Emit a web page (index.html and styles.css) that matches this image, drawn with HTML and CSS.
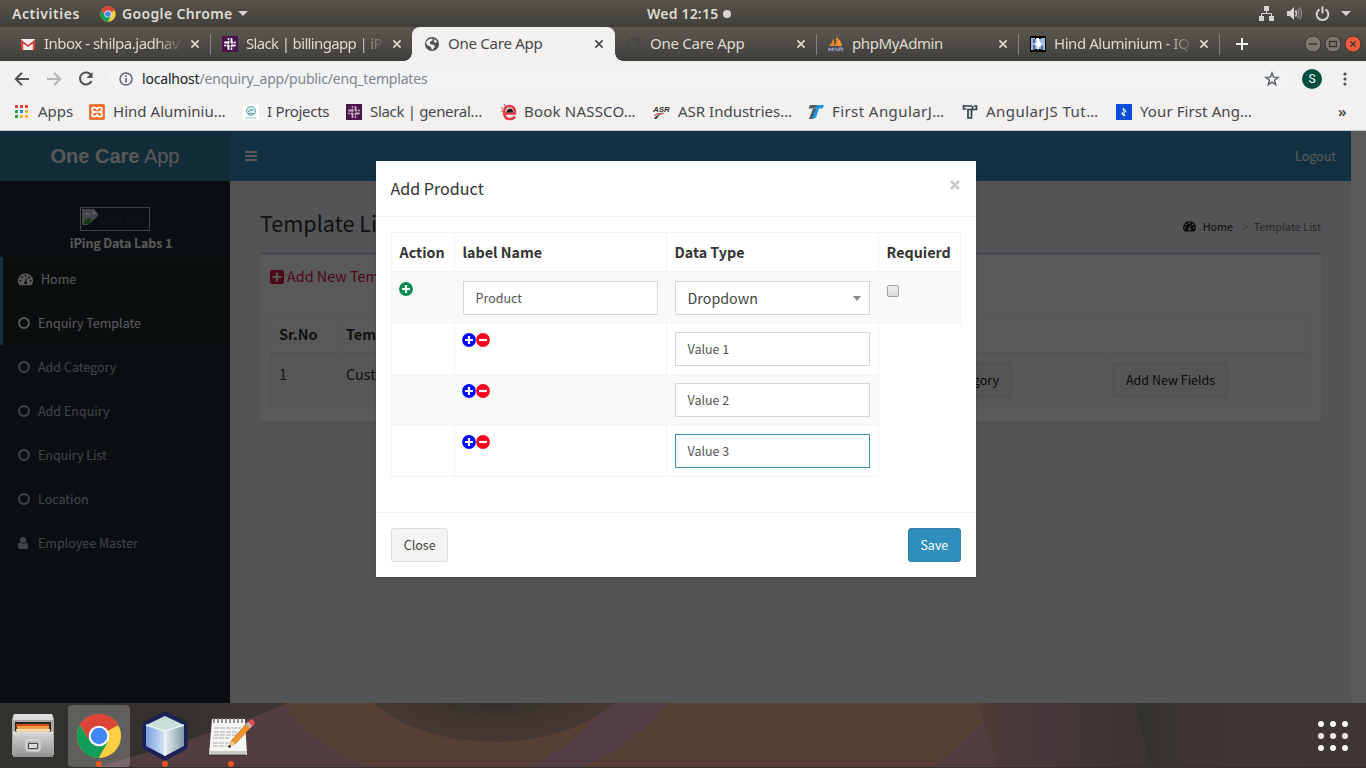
FILE: index.html
```html
<!DOCTYPE html>
<html lang="en">
<head>
<meta charset="utf-8">
<title>One Care App</title>
<link rel="stylesheet" href="styles.css">
</head>
<body>
<svg class="defs" width="0" height="0">
  <symbol id="chrome" viewBox="0 0 48 48">
    <circle cx="24" cy="24" r="23" fill="#ffcd40"/>
    <path d="M24 24 4.1 12.5A23 23 0 0 1 43.9 12.5z" fill="#db4437"/>
    <path d="M24 13H44A23 23 0 0 0 4.1 12.5L14.5 29.5z" fill="#db4437"/>
    <path d="M4.1 12.5A23 23 0 0 0 23.6 47L33.5 29.5 24 24 14.5 29.5z" fill="#0f9d58"/>
    <circle cx="24" cy="24" r="10.8" fill="#fff"/><circle cx="24" cy="24" r="8.6" fill="#4285f4"/>
  </symbol>
  <symbol id="plus-circle" viewBox="0 0 14 14"><circle cx="7" cy="7" r="6.9" fill="currentColor"/><path d="M7 3v8M3 7h8" stroke="#fff" stroke-width="2.200"/></symbol>
  <symbol id="minus-circle" viewBox="0 0 14 14"><circle cx="7" cy="7" r="6.9" fill="currentColor"/><path d="M3 7h8" stroke="#fff" stroke-width="2.200"/></symbol>
  <symbol id="dash" viewBox="0 0 14 12"><path d="M7 .4A6.8 6.8 0 0 0 1.2 11q.2.4.6.4h10.4q.4 0 .6-.4A6.8 6.8 0 0 0 7 .4z" fill="currentColor"/><g class="dash-dots"><circle cx="2.1" cy="7.2" r=".95"/><circle cx="3.6" cy="3.8" r=".95"/><circle cx="7" cy="2.4" r=".95"/><circle cx="10.4" cy="3.8" r=".95"/><circle cx="11.9" cy="7.2" r=".95"/><circle cx="7" cy="9" r="1.4"/><path d="M6.6 8.6 7.6 4.6l.8.2-.8 4z"/></g></symbol>
  <symbol id="ring" viewBox="0 0 12 12"><circle cx="6" cy="6" r="4.9" fill="none" stroke="currentColor" stroke-width="2"/></symbol>
  <symbol id="x" viewBox="0 0 10 10"><path d="M1.400 1.400l7.200 7.200M8.600 1.400l-7.200 7.200" stroke="currentColor" stroke-width="1.700"/></symbol>
  <symbol id="slack" viewBox="0 0 16 16"><path fill="#4a154b" d="M0 0h16v16H0z"/><g stroke="currentColor" stroke-width="1.900" stroke-linecap="round"><path d="M6.500 3v.1M6.500 5.600V7M9.500 3v3.500M6.500 9.500V13M9.500 9.500v1M9.500 12.900v.1M3 6.500h3.500M9.500 6.500h1M12.900 6.500h.1M3 9.500h.1M5.500 9.500h1M9.500 9.500H13"/></g></symbol>
</svg>
<div class="screen">
  <header class="topbar">
    <span class="activities">Activities</span>
    <svg class="tb-chrome" width="16" height="16"><use href="#chrome"/></svg>
    <span class="appname">Google Chrome</span><i class="tri"></i>
    <span class="clock">Wed 12:15</span><i class="dot"></i>
    <svg class="tray" width="96" height="17" viewBox="0 0 96 17"><g fill="#d6d4d0"><path d="M6 1h5v5H6zM1 11h5v5H1zM11 11h5v5h-5z"/><path d="M3.500 11V8.500h10V11M8.500 6v2.500" fill="none" stroke="#d6d4d0"/><path d="M29 6h3l4-4v13l-4-4h-3z"/></g><g fill="none"><path d="M37.500 5.500q2 3 0 6" stroke="#d6d4d0" stroke-width="1.500"/><path d="M39.500 4q3 4.500 0 9M41.500 2.500q4 6 0 12" stroke="#8b8983" stroke-width="1.500"/><path d="M61.500 4.300a5.800 5.800 0 1 0 6 0M64.500 1.500v7" stroke="#d6d4d0" stroke-width="2"/></g><path d="M83 6h10l-5 5z" fill="#d6d4d0"/></svg>
  </header>
  <nav class="tabs">
    <div class="tab"><svg width="16" height="16" viewBox="0 0 16 16"><path d="M1 3h14v11H1z" fill="#eee"/><path d="M1 14V3.500l7 5.500 7-5.500V14h-2.200V7.500L8 11 3.200 7.500V14z" fill="#d93f35"/></svg><span class="tt t1 fade">Inbox - shilpa.jadhav</span><svg class="cl" width="10" height="10"><use href="#x"/></svg></div>
    <div class="tab nosep"><svg class="white" width="16" height="16"><use href="#slack"/></svg><span class="tt t2 fade">Slack | billingapp | iP</span><svg class="cl" width="10" height="10"><use href="#x"/></svg></div>
    <div class="tab active"><svg width="16" height="16" viewBox="0 0 16 16"><circle cx="8" cy="8" r="7" fill="#4d4f52"/><path d="M2 6q3-4 6-3.500L9 4 6 6v2l4 1 1 2-3 3-1-3-4-2zM10 3l3 2-1 2-2-1z" fill="#f2f1f0"/></svg><span class="tt t3">One Care App</span><svg class="cl" width="10" height="10"><use href="#x"/></svg></div>
    <div class="tab"><svg width="16" height="16" viewBox="0 0 16 16"><circle cx="8" cy="8" r="7" fill="#474743"/><path d="M3 5q3-3 5-2L6 7l4 2-2 4-2-4-4-1z" fill="#504f4b"/></svg><span class="tt t3">One Care App</span><svg class="cl" width="10" height="10"><use href="#x"/></svg></div>
    <div class="tab"><svg width="16" height="16" viewBox="0 0 16 16"><path d="M1 10Q5 6 5 2q2 4 1 8zM6.500 10Q9 6 8 1q6 4 6 9z" fill="#f3952d"/><path d="M3.500 10 5 4M9 10V4" stroke="#c87425"/><path d="M0 11.500h16v4H0z" fill="#52587e"/><path d="M1 15v-3l2 2 2-2v3M7 12l2 2v1M11 15v-3h3v3" stroke="#d1c7b6" fill="none" stroke-width=".8"/></svg><span class="tt t4">phpMyAdmin</span><svg class="cl" width="10" height="10"><use href="#x"/></svg></div>
    <div class="tab last"><svg width="16" height="16" viewBox="0 0 16 16"><path d="M0 0h16v16H0z" fill="#000"/><path d="M1 2h4v12H1zM11 2h4v12h-4zM5 3h6v10H5z" fill="#9db9e8"/><path d="M6 2h3l1 4 2 2-3 3-1 4-1-5-2-2 2-2z" fill="#fff"/><path d="M4 3v4M4 9v5M12 10v4" stroke="#111"/></svg><span class="tt t5 fade">Hind Aluminium - IQ</span><svg class="cl" width="10" height="10"><use href="#x"/></svg></div>
    <svg class="newtab" width="14" height="14" viewBox="0 0 14 14"><path d="M7 1v12M1 7h12" stroke="#efeeec" stroke-width="2"/></svg>
    <svg class="wm" width="60" height="20" viewBox="0 0 60 20"><g stroke="#383732"><circle cx="11" cy="10" r="8" fill="#7c7972"/><circle cx="31" cy="10" r="8" fill="#7c7972"/><circle cx="51" cy="10" r="8" fill="#ed5b3a"/></g><path d="M7 10h8M27.500 7.500h7v5h-7zM48.500 7.500l5 5M53.500 7.500l-5 5" fill="none" stroke="#393731" stroke-width="1.300"/></svg>
  </nav>
  <div class="toolbar">
    <svg class="nav" width="100" height="20" viewBox="0 0 100 20"><g fill="none" stroke-width="2"><path d="M29 10H16M22 3.800 15.800 10l6.200 6.200" stroke="#505356"/><path d="M47 10h13M54 3.800 60.200 10 54 16.200" stroke="#b3b3b2"/><path d="M91.200 6.500A6 6 0 1 0 91.500 12" stroke="#505356"/></g><path d="M92.500 3v6h-6z" fill="#505356"/></svg>
    <div class="omni">
      <svg width="14" height="14" viewBox="0 0 14 14"><circle cx="7" cy="7" r="6" fill="none" stroke="#5f6368" stroke-width="1.500"/><path d="M7 6v4.500M7 3.500v1.600" stroke="#5f6368" stroke-width="1.600"/></svg>
      <span class="url"><b>localhost</b>/enquiry_app/public/enq_templates</span>
      <svg class="star" width="16" height="16" viewBox="0 0 16 16"><path d="M8 2l1.600 4.100 4.500.3-3.500 2.900 1.100 4.300L8 11.200l-3.700 2.400 1.100-4.300-3.500-2.900 4.500-.3z" fill="none" stroke="#5a5d62" stroke-width="1.400"/></svg>
    </div>
    <span class="avatar">S</span>
    <svg class="kebab" width="4" height="14" viewBox="0 0 4 14"><g fill="#505356"><circle cx="2" cy="2" r="1.600"/><circle cx="2" cy="7" r="1.600"/><circle cx="2" cy="12" r="1.600"/></g></svg>
  </div>
  <div class="bookmarks">
    <div class="bm b0"><svg width="16" height="16" viewBox="0 0 16 16"><g fill="#ea4335"><path d="M1 1h3v3H1zM6 1h3v3H6zM11 1h3v3h-3z"/></g><path d="M1 6h3v3H1zM1 11h3v3H1z" fill="#2da04e"/><path d="M6 6h3v3H6z" fill="#1a8cf0"/><path d="M11 6h3v3h-3zM6 11h3v3H6zM11 11h3v3h-3z" fill="#fbb02d"/></svg><span>Apps</span></div>
    <div class="bm b1"><svg width="16" height="16" viewBox="0 0 16 16"><rect width="16" height="16" rx="2" fill="#f07230"/><path d="M6.500 8Q3 8 3 5.500t2.500-2Q8 3.500 8 6q0-2.500 2.500-2.500T13 5.500 10 8q3 0 3 2.500t-2.500 2Q8 12.500 8 10q0 2.500-2.500 2.500T3 10.500 6.500 8M6 8h4" fill="none" stroke="#fff" stroke-width="1.700"/></svg><span>Hind Aluminiu…</span></div>
    <div class="bm b2"><svg width="16" height="16" viewBox="0 0 16 16"><path d="M0 0h16v16H0z" fill="#fff"/><circle cx="8" cy="7" r="4.500" fill="#d4ebed" stroke="#5aa9ae"/><path d="M5 8q2-3 5-2M5 9.500h6" stroke="#5d91a5" fill="none"/><path d="M2 14h12" stroke="#79b6bc" stroke-dasharray="1.500 .5"/></svg><span>I Projects</span></div>
    <div class="bm b3"><svg class="pink" width="16" height="16"><use href="#slack"/></svg><span>Slack | general…</span></div>
    <div class="bm b4"><svg width="18" height="18" viewBox="0 0 18 18"><path d="M4.500 10.500H15Q15.500 3.500 9.800 3 4 3 4 9.800 4.500 16 10 16q3.500 0 5-2.500" fill="none" stroke="#e6394a" stroke-width="2.500"/><path d="M6 9.500q1-4 4-4t3.500 4z" fill="#222"/><path d="M1 4l2 2M1 8h2M4 1l1 2" stroke="#e6394a"/></svg><span>Book NASSCO…</span></div>
    <div class="bm b5"><svg width="17" height="16" viewBox="0 0 17 16"><text x="0" y="7.500" class="asr">ASR</text><path d="M1 10.500q7-2.500 11-1.500-6 1-8.500 6H1q1-3.500 7-5" fill="#3b3b3b"/><path d="M1 11.500q5-2.500 9-2" stroke="#d8475a" fill="none"/></svg><span>ASR Industries…</span></div>
    <div class="bm b6"><svg width="18" height="16" viewBox="0 0 18 16"><path d="M3 1h9l-2 3.500H1.500z" fill="#555b61"/><path d="M6 4.500h4L6 15H2z" fill="#555b61"/><path d="M10 1h7l-1.500 3.500H12L9 13.500 5 15 9 4z" fill="#1597e5"/></svg><span>First AngularJ…</span></div>
    <div class="bm b7"><svg width="16" height="16" viewBox="0 0 16 16"><path d="M1.500 1v4h3M1.500 2H10M12 2h2.500v3.500H9.500V14H6V5.500h3.500Q11 5 10.500 2" fill="none" stroke="#33434d" stroke-width="1.700"/></svg><span>AngularJS Tut…</span></div>
    <div class="bm b8"><svg width="16" height="16" viewBox="0 0 16 16"><path d="M0 0h16v16H0z" fill="#0b4fd6"/><path d="M7 3.500 10.500 7 8 9.500 9.500 11 8 12.500 5 9.500 7.500 7 6.500 5.500z" fill="#fff"/><path d="M8.500 6 7 9.500" stroke="#0b4fd6" stroke-width=".8"/></svg><span>Your First Ang…</span></div>
    <span class="more">»</span>
  </div>

  <main class="page">
    <div class="app">
      <div class="apphead"><div class="logo"><b>One Care</b> App</div><svg class="bars" width="12" height="10" viewBox="0 0 12 10"><path d="M0 0h12v2H0zM0 4h12v2H0zM0 8h12v2H0z" fill="#fff"/></svg><span class="logout">Logout</span></div>
      <div class="body">
        <aside class="side">
          <div class="user"><div class="broken"><svg width="16" height="16" viewBox="0 0 16 16"><path d="M0 0h11l5 5v11H0z" fill="#c1c5d6"/><path d="M2 6q3-5 6 0z" fill="#fff"/><path d="M1 15q5-9 8-4l2-2-4 6z" fill="#3ba336"/><path d="M16 7 6 16h10z" fill="#222d32"/><path d="M11 0v5h5" fill="#fff"/></svg><span>User Ima</span></div><b>iPing Data Labs 1</b></div>
          <div class="mi on home"><svg width="15" height="13"><use href="#dash"/></svg><span>Home</span></div>
          <div class="mi on"><svg width="12" height="12"><use href="#ring"/></svg><span>Enquiry Template</span></div>
          <div class="mi"><svg width="12" height="12"><use href="#ring"/></svg><span>Add Category</span></div>
          <div class="mi"><svg width="12" height="12"><use href="#ring"/></svg><span>Add Enquiry</span></div>
          <div class="mi"><svg width="12" height="12"><use href="#ring"/></svg><span>Enquiry List</span></div>
          <div class="mi"><svg width="12" height="12"><use href="#ring"/></svg><span>Location</span></div>
          <div class="mi"><svg width="12" height="12" viewBox="0 0 12 12"><circle cx="5" cy="3" r="3" fill="currentColor"/><path d="M2 5.500Q5 8 8 5.500q2 .5 2 4Q10 12 8 12H2Q0 12 0 9.500q0-3.500 2-4z" fill="currentColor"/></svg><span>Employee Master</span></div>
        </aside>
        <section class="content">
          <div class="chead"><h1>Template List</h1><div class="crumb"><svg width="13" height="11"><use href="#dash"/></svg><span class="ch">Home</span><i>&gt;</i><span class="ct">Template List</span></div></div>
          <div class="box">
            <div class="add"><svg width="14" height="14" viewBox="0 0 14 14"><rect width="14" height="14" rx="2.500" fill="currentColor"/><path d="M7 2.500v9M2.500 7h9" stroke="#fff" stroke-width="2.200"/></svg><span>Add New Template</span></div>
            <div class="grid">
              <div class="gr gh"><div class="g1">Sr.No</div><div class="g2">Template Name</div><div class="g3"></div></div>
              <div class="gr gd"><div class="g1">1</div><div class="g2">Customer</div><div class="g4"><span class="btn cat">Add Category</span></div><div class="g5"><span class="btn fields">Add New Fields</span></div></div>
            </div>
          </div>
        </section>
      </div>
    </div>
    <div class="overlay">
      <div class="modal">
        <div class="mh"><span class="mt">Add Product</span><svg width="10" height="10" viewBox="0 0 10 10"><path d="M1 1l8 8M9 1 1 9" stroke="#c8c8c8" stroke-width="2.500"/></svg></div>
        <div class="mb">
          <div class="tbl">
            <div class="tr th"><div class="c1">Action</div><div class="c2">label Name</div><div class="c3">Data Type</div><div class="c4">Requierd</div></div>
            <div class="tr odd"><div class="c1"><svg class="green" width="14" height="14"><use href="#plus-circle"/></svg></div><div class="c2"><div class="inp">Product</div></div><div class="c3"><div class="inp sel">Dropdown<i></i></div></div><div class="c4"><i class="chk"></i></div></div>
            <div class="tr sub"><div class="c1"></div><div class="c2"><svg class="blue" width="14" height="14"><use href="#plus-circle"/></svg><svg class="red" width="14" height="14"><use href="#minus-circle"/></svg></div><div class="c3"><div class="inp">Value 1</div></div></div>
            <div class="tr sub odd"><div class="c1"></div><div class="c2"><svg class="blue" width="14" height="14"><use href="#plus-circle"/></svg><svg class="red" width="14" height="14"><use href="#minus-circle"/></svg></div><div class="c3"><div class="inp">Value 2</div></div></div>
            <div class="tr sub"><div class="c1"></div><div class="c2"><svg class="blue" width="14" height="14"><use href="#plus-circle"/></svg><svg class="red" width="14" height="14"><use href="#minus-circle"/></svg></div><div class="c3"><div class="inp focus">Value 3</div></div></div>
          </div>
        </div>
        <div class="mf"><span class="btn">Close</span><span class="btn save">Save</span></div>
      </div>
    </div>
  </main>

  <footer class="dock">
    <svg class="wall" width="1366" height="65" viewBox="0 0 1366 65">
      <defs>
        <linearGradient id="w1"><stop offset="0" stop-color="#33322d"/><stop offset=".6" stop-color="#35312d"/><stop offset="1" stop-color="#403632"/></linearGradient>
        <linearGradient id="w2"><stop offset="0" stop-color="#533b35"/><stop offset=".1" stop-color="#4b3938"/><stop offset=".35" stop-color="#47373a"/><stop offset=".95" stop-color="#3a3430"/><stop offset="1" stop-color="#30312b"/></linearGradient>
        <linearGradient id="w3"><stop offset="0" stop-color="#30322c"/><stop offset=".2" stop-color="#3b3430"/><stop offset=".5" stop-color="#413634"/><stop offset="1" stop-color="#3e3634"/></linearGradient>
        <radialGradient id="w4"><stop offset="0" stop-color="#31312c"/><stop offset=".5" stop-color="#33312c"/><stop offset=".75" stop-color="#42362f"/><stop offset="1" stop-color="#473833"/></radialGradient>
      </defs>
      <path d="M0 0h1366v65H0z" fill="#523c40"/>
      <path d="M0 0h290Q190 40 90 65H0z" fill="url(#w1)"/>
      <path d="M283 0h725L932 65H373Q315 45 283 0z" fill="#573f36"/>
      <path d="M606 0h60q-28 42-88 65h-52q56-25 80-65z" fill="#543c44"/>
      <ellipse cx="494" cy="-36" rx="136" ry="75" fill="url(#w4)"/>
      <path d="M979 0h160l25 65H996z" fill="url(#w2)"/>
      <path d="M1134 0h232v65H1152z" fill="url(#w3)"/>
      <path d="M0 64.500h1366" stroke="#33302e"/>
    </svg>
    <div class="apps">
      <div class="di files"><svg width="44" height="46" viewBox="0 0 44 46"><defs><linearGradient id="f" x2="0" y2="1"><stop stop-color="#d6d6d6"/><stop offset="1" stop-color="#929292"/></linearGradient></defs><path d="M2 2h40l1 5v35H1V7z" fill="#a9a9a9"/><path d="M3 1h38l1 6H2z" fill="#dcdcdc"/><path d="M4 9h36v12H4z" fill="#2b2521"/><path d="M5 11h33v3H5z" fill="#c9501c"/><path d="M6 13h32v6H6z" fill="#f89b45"/><path d="M5 16h34v2H5z" fill="#ffe0b5"/><path d="M2 19h40v25H2z" fill="url(#f)"/><path d="M2 19h40" stroke="#eee"/><rect x="15" y="27" width="14" height="11" rx="2" fill="#bbb" stroke="#e8e8e8"/><path d="M17.500 30.500h9v5h-9z" fill="#ddd" stroke="#444"/></svg></div>
      <div class="di cur"><svg width="46" height="46"><use href="#chrome"/></svg><i></i></div>
      <div class="di"><svg width="46" height="48" viewBox="0 0 46 48"><defs><linearGradient id="c1"><stop stop-color="#7b9ee0"/><stop offset="1" stop-color="#d7e4f6"/></linearGradient><linearGradient id="c2"><stop stop-color="#e8f0f3"/><stop offset="1" stop-color="#7e9aa5"/></linearGradient></defs><path d="M23 2 43 12v23L23 46 3 35V12z" fill="#c4dfda" stroke="#1c2155" stroke-width="5" stroke-linejoin="round"/><path d="M4 13 23 19v25L4 34z" fill="url(#c1)"/><path d="M42 13 23 19v25l19-10z" fill="url(#c2)"/><path d="M4 13 23 4l19 9-19 6z" fill="#c6dfd8"/><path d="M4 13l19 6 19-6M23 19v25" fill="none" stroke="#eaf4fb" stroke-width="1.500"/></svg><i></i></div>
      <div class="di"><svg width="48" height="44" viewBox="0 0 48 44"><path d="M5 5h33l2 36H2z" fill="#f5f5f3"/><path d="M2 37h38v3H2z" fill="#cbcbc4"/><path d="M2 41h37" stroke="#333"/><path d="M7 4v5M11 4v5M15 4v5M19 4v5M23 4v5M27 4v5M31 4v5M35 4v5" stroke="#777" stroke-width="1.600"/><path d="M7 14h27M7 18h24M7 21h25M6 24h16M6 29h16M6 32h14" stroke="#aaa" stroke-dasharray="5 1"/><path d="M22 33l3-7L41 8l4 4-16 17z" fill="#f1942c" stroke="#b5651d" stroke-width=".7"/><path d="M40 9l4-4q4 1 3.500 5L45 13z" fill="#e64a50"/><path d="M39 10l2-2 4 4-2 2z" fill="#bbb"/><path d="M22 33l3-6 3 3z" fill="#efcd96"/><circle cx="22.500" cy="32.500" r="1.300" fill="#222"/></svg><i></i></div>
    </div>
    <svg class="all" width="32" height="32" viewBox="0 0 32 32"><g fill="#f4f3f1"><circle cx="4" cy="4" r="3"/><circle cx="16" cy="4" r="3"/><circle cx="28" cy="4" r="3"/><circle cx="4" cy="16" r="3"/><circle cx="16" cy="16" r="3"/><circle cx="28" cy="16" r="3"/><circle cx="4" cy="28" r="3"/><circle cx="16" cy="28" r="3"/><circle cx="28" cy="28" r="3"/></g></svg>
  </footer>
</div>
</body>
</html>
```
FILE: styles.css
```css
* { box-sizing: border-box; }
body { margin: 0; overflow: hidden; }
svg { display: block; flex: none; }
i { font-style: normal; }
.defs { position: absolute; }
.screen { width: 1366px; height: 768px; display: flex; flex-direction: column; font-family: "Noto Sans", sans-serif; font-size: 14px; white-space: nowrap; }

.topbar { height: 27px; display: flex; align-items: center; background: linear-gradient(#56534b, #403f3a); color: #dfdbd2; font-weight: 600; font-size: 14px; padding-left: 12px; }
.activities { width: 88px; letter-spacing: .55px; }
.appname { margin-left: 6px; width: 116px; letter-spacing: .35px; }
.tri { width: 0; border: 5px solid transparent; border-top-color: #d6d4d0; border-bottom: 0; }
.clock { margin-left: 399px; width: 76px; letter-spacing: .2px; margin-bottom: 1px; }
.dot { width: 8px; height: 8px; border-radius: 50%; background: #d6d4d0; }
.tray { margin-left: auto; margin-right: 12px; }

.tabs { height: 34px; display: flex; background: linear-gradient(#5b5850, #403f3a); padding-left: 9px; align-items: stretch; }
.tab { position: relative; width: 202px; display: flex; align-items: center; padding-left: 11px; color: #dfdbd2; }
.tab::after { content: ""; position: absolute; right: 0; top: 7px; width: 1px; height: 21px; background: #86837c; }
.tab.nosep { width: 203px; margin-right: -1px; }
.tab.nosep::after { display: none; }
.tt { width: 139px; margin-left: 8px; margin-right: 7px; font-size: 15px; letter-spacing: -.25px; padding-bottom: 2px; }
.t1 { letter-spacing: -.5px; }
.t2 { letter-spacing: -.65px; }
.t4 { letter-spacing: -.4px; }
.t5 { letter-spacing: -.45px; }
.last .tt { margin-right: 6px; }
.fade { -webkit-mask-image: linear-gradient(90deg, #000 112px, transparent 140px); mask-image: linear-gradient(90deg, #000 112px, transparent 140px); }
.tab.active { background: #f2f1f0; color: #45474b; border-radius: 8px 8px 0 0; width: 203px; margin-right: -1px; margin-left: -1px; padding-left: 12px; z-index: 1; }
.tab.active::before, .tab.active::after { content: ""; position: absolute; background: radial-gradient(circle at 0 0, transparent 7.5px, #f2f1f0 8px); left: -8px; right: auto; top: auto; bottom: 0; width: 8px; height: 8px; }
.tab.active::after { left: auto; right: -8px; background: radial-gradient(circle at 100% 0, transparent 7.5px, #f2f1f0 8px); }
.tab.active + .tab { margin-left: 1px; }
.tab.active + .tab::after { right: 0; }
.tab.last { width: 201px; }
.newtab { margin: 10px 0 0 15px; }
.wm { margin: 7px 4px 0 auto; }

.toolbar { height: 36px; background: #f2f1f0; display: flex; align-items: center; }
.nav { margin-right: 8px; }
.omni { width: 1182px; height: 28px; margin-right: 12px; border-radius: 14px; background: #f1f3f4; display: flex; align-items: center; padding: 0 10px 0 11px; }
.url { margin-left: 9px; font-size: 14px; color: #80868b; letter-spacing: -.19px; padding-bottom: 1px; }
.url b { font-weight: 400; color: #202124; }
.star { margin-left: auto; }
.avatar { width: 20px; height: 20px; border-radius: 50%; background: #004d40; color: #fff; font: 12px/20px Roboto, sans-serif; text-align: center; }
.kebab { margin-left: 21px; }

.bookmarks { height: 34px; background: #f2f1f0; border-bottom: 1px solid #c9c9c7; display: flex; align-items: center; padding: 0 0 4px 14px; font-size: 15px; color: #45474b; }
.bm { display: flex; align-items: center; gap: 8px; }
.bm svg { overflow: visible; }
.bm span { padding-bottom: 1px; }
.b0 { width: 75px; } .b1 { width: 154px; letter-spacing: .03px; } .b2 { width: 103px; letter-spacing: -.3px; } .b3 { width: 154px; letter-spacing: -.33px; }
.b4 { width: 153px; gap: 6px; letter-spacing: .2px; } .b5 { width: 154px; } .b6 { width: 155px; gap: 7px; letter-spacing: .42px; } .b7 { width: 154px; letter-spacing: .45px; } .b8 { width: 222px; letter-spacing: .1px; }
.asr { font: italic bold 8px "Liberation Sans", sans-serif; fill: #333; letter-spacing: 0; }
.pink { color: #c9a9c9; } .white { color: #fff; }
.more { font-weight: 600; padding-bottom: 2px; }

.page { position: relative; height: 572px; background: #fff; font-family: "Noto Sans CJK SC", sans-serif; font-size: 12.5px; line-height: 20px; color: #333; overflow: hidden; }
.app { width: 1351px; height: 572px; display: flex; flex-direction: column; }
.apphead { height: 50px; background: #348ebc; display: flex; align-items: center; color: #fff; flex: none; }
.logo { width: 230px; height: 50px; background: #347ea6; text-align: center; font: 20px/50px "Liberation Sans", sans-serif; margin-right: 15px; }
.logout { margin-left: auto; margin-right: 15px; }
.body { display: flex; flex: 1; }
.side { width: 230px; background: #222d32; color: #b8c7ce; }
.user { height: 76px; padding-top: 26px; display: flex; flex-direction: column; align-items: center; color: #fff; }
.broken { width: 70px; height: 24px; border: 1px solid #b9bcc0; display: flex; padding: 1px; color: #333a3f; font-size: 12px; line-height: 20px; }
.user b { line-height: 24px; margin-left: 12px; letter-spacing: -.13px; }
.mi { height: 44px; display: flex; align-items: center; padding-left: 18px; gap: 8px; }
.mi > svg { overflow: visible; }
.mi.on { background: #1e282c; border-left: 3px solid #3c8dbc; padding-left: 15px; color: #fff; }
.dash-dots { fill: var(--dot, #1e282c); }
.content { flex: 1; background: #ecf0f5; padding: 0 30px; }
.chead { height: 71px; display: flex; justify-content: space-between; padding-top: 24px; }
.chead h1 { margin: 0; font-size: 21.6px; line-height: 36px; font-weight: 400; }
.crumb { display: flex; align-items: center; height: 42px; font-size: 10.8px; color: #777; }
.ch { color: #222; margin-left: 7px; width: 40px; }
.crumb i { color: #aaa; width: 11px; }
.crumb svg { color: #222; --dot: #ecf0f5; }
.box { height: 170px; background: #fff; border-top: 3px solid #d2d6de; border-radius: 3px; box-shadow: 0 1px 1px rgba(0,0,0,.1); padding: 10px; }
.add { display: flex; align-items: center; gap: 3px; height: 24px; font-size: 14.4px; color: #dc1448; }
.add svg { margin-bottom: 1px; }
.add span { padding-bottom: 2px; }
.grid { margin-top: 24px; border: 1px solid #f0f0f0; font-size: 14.4px; }
.gr { display: flex; }
.gh { height: 40px; font-weight: 700; line-height: 39px; border-bottom: 2px solid #f0f0f0; }
.gd { height: 51px; background: #f9f9f9; line-height: 40px; }
.g1 { width: 67px; padding-left: 8px; border-right: 1px solid #f0f0f0; }
.g2 { width: 548px; padding-left: 8px; }
.g4 { width: 219px; padding: 9px 92px 0 0; display: flex; justify-content: flex-end; border-right: 1px solid #f0f0f0; }
.g5 { padding: 9px 8px; }
.btn { height: 34px; border: 1px solid #ddd; border-radius: 3px; background: #f4f4f4; color: #444; font-size: 12.5px; line-height: 32px; padding: 0 11.7px; display: block; }
.fields, .cat { color: #222; padding: 0 12px; }

.overlay { position: absolute; inset: 0; background: rgba(0,0,0,.65); padding-top: 30px; }
.modal { width: 600px; height: 416px; margin-left: 376px; background: #fff; box-shadow: 0 2px 3px rgba(0,0,0,.125); }
.mh { height: 56px; border-bottom: 1px solid #f4f4f4; display: flex; justify-content: space-between; padding: 15px 16px 0 14.5px; }
.mt { font-size: 16.1px; line-height: 25px; }
.mh svg { margin-top: 4px; }
.mb { height: 295px; padding: 15px; }
.tbl { width: 570px; border: solid #f4f4f4; border-width: 1px 0 0 1px; font-size: 14.3px; }
.tr { display: flex; height: 51px; }
.tr.sub { width: 487px; }
.tr > div { border: solid #f4f4f4; border-width: 0 1px 1px 0; padding: 8px 8px 0; display: flex; align-items: flex-start; }
.tr > .c1 { width: 63px; padding-left: 7.4px; } .c2, .c3 { width: 212px; } .c4 { width: 82px; }
.tr.th > div { height: 40px; border-bottom-width: 2px; padding: 9px 7.6px 0; }
.tr.th { height: 40px; font-weight: 700; }
.odd { background: #f9f9f9; }
.tr svg { margin-top: 1px; }
.tr.sub > .c2 { padding-left: 7px; }
.inp { width: 195px; height: 34px; border: 1px solid #d2d6de; background: #fff; padding: 0 11.5px; font-size: 12.5px; line-height: 32px; color: #555; flex: none; display: flex; }
.sel { font-size: 14.3px; color: #444; align-items: center; justify-content: space-between; padding-right: 8px; }
.sel i { border: 4px solid transparent; border-top: 5px solid #888; border-bottom: 0; }
.focus { border-color: #3c8dbc; }
.chk { width: 12px; height: 12px; margin-top: 4px; border: 1px solid #a0a0a0; border-radius: 2px; background: linear-gradient(#eee, #dcdcdc); }
.green { color: #008d4c; } .blue { color: #0008ff; } .red { color: #ff001c; }
.mf { height: 65px; border-top: 1px solid #f4f4f4; padding: 15px; display: flex; justify-content: space-between; }
.save { background: #2e8fbc; border-color: #367fa9; color: #fff; }

.dock { position: relative; height: 65px; overflow: hidden; display: flex; justify-content: space-between; align-items: center; }
.wall { position: absolute; inset: 0; }
.apps { position: relative; display: flex; gap: 4px; padding-left: 2px; }
.di { position: relative; width: 62px; height: 62px; border-radius: 4px; display: flex; align-items: center; justify-content: center; }
.cur { background: rgba(255,255,255,.22); }
.di i { position: absolute; left: 28px; bottom: 0; width: 6px; height: 6px; border-radius: 50%; background: #e95420; }
.all { position: relative; margin-right: 17px; }
```
